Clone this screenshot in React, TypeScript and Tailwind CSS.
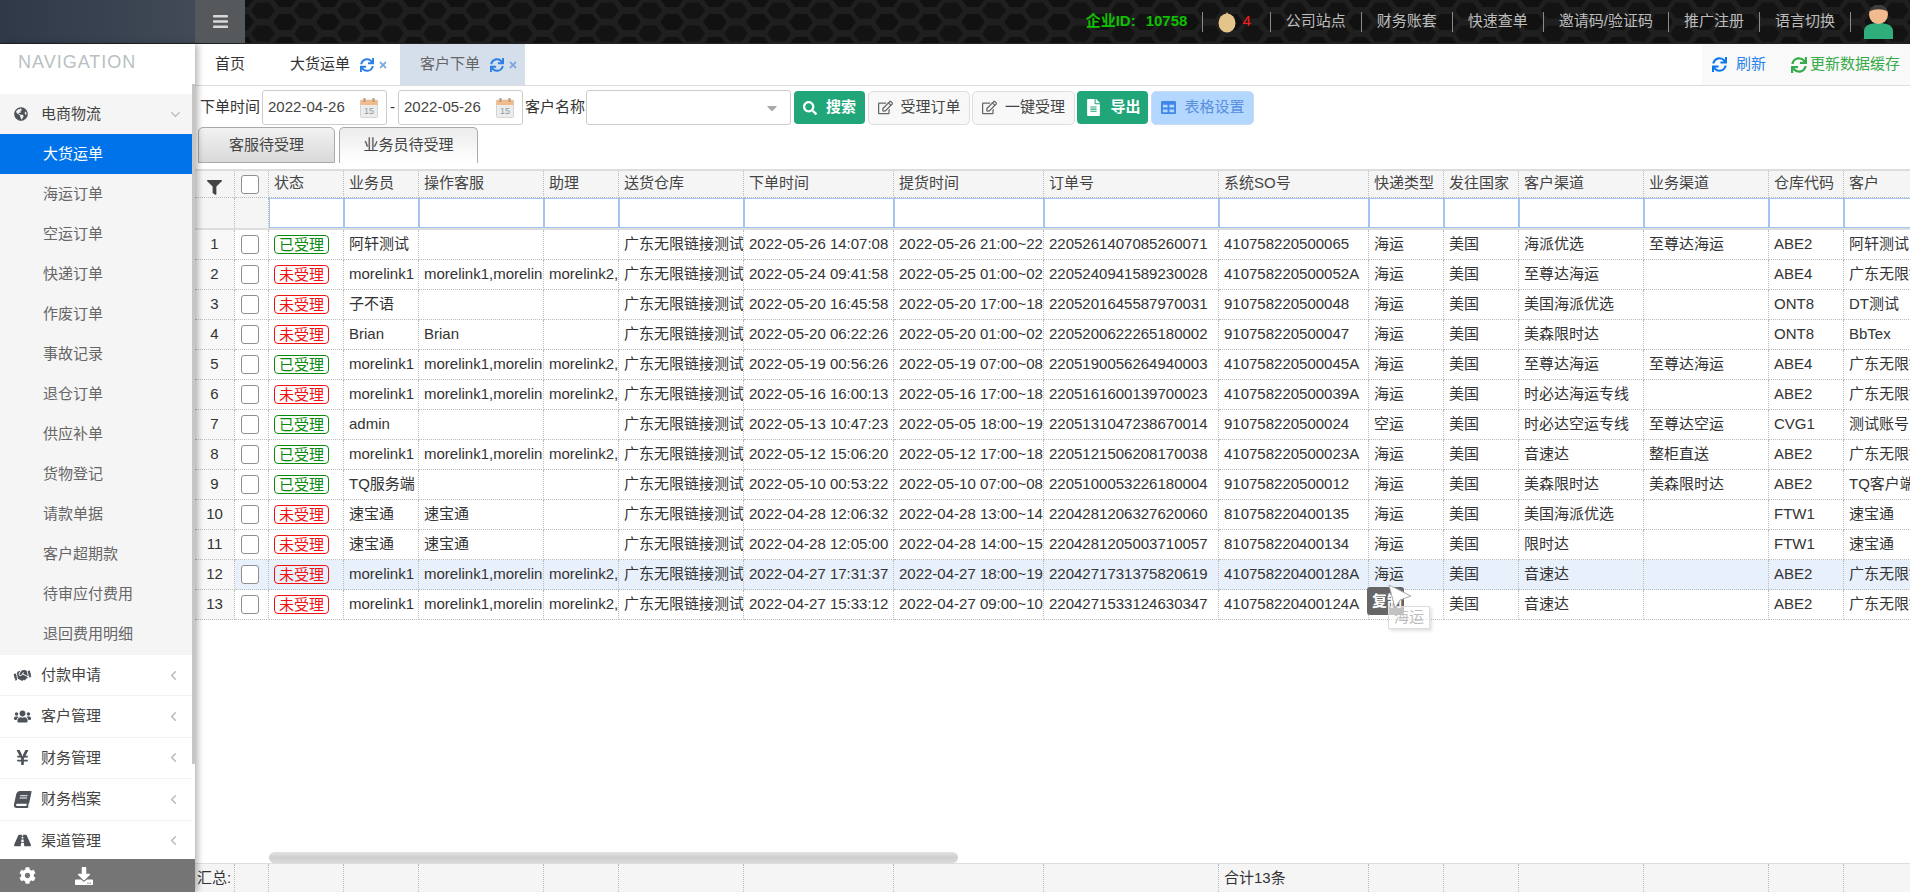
import {
  FaBars,
  FaBook,
  FaCaretDown,
  FaCog,
  FaDownload,
  FaFileAlt,
  FaFilter,
  FaGlobeAmericas,
  FaHandshake,
  FaRegEdit,
  FaRoad,
  FaSearch,
  FaSync,
  FaTable,
  FaTimes,
  FaUsers,
  FaYenSign,
} from "react-icons/fa";
import { ChevronDown, ChevronLeft } from "lucide-react";

const FONT = { fontFamily: '"Liberation Sans", "Noto Sans CJK SC", sans-serif' };

const SUB_MENU = [
  "大货运单",
  "海运订单",
  "空运订单",
  "快递订单",
  "作废订单",
  "事故记录",
  "退仓订单",
  "供应补单",
  "货物登记",
  "请款单据",
  "客户超期款",
  "待审应付费用",
  "退回费用明细",
];

const MENU = [
  { label: "付款申请", Icon: FaHandshake, tilt: "-rotate-12" },
  { label: "客户管理", Icon: FaUsers, tilt: "" },
  { label: "财务管理", Icon: FaYenSign, tilt: "" },
  { label: "财务档案", Icon: FaBook, tilt: "-skew-x-12" },
  { label: "渠道管理", Icon: FaRoad, tilt: "" },
];

const TOP_LINKS = ["公司站点", "财务账套", "快速查单", "邀请码/验证码", "推广注册", "语言切换"];

const COLUMNS = [
  { title: "状态", width: 75 },
  { title: "业务员", width: 75 },
  { title: "操作客服", width: 125 },
  { title: "助理", width: 75 },
  { title: "送货仓库", width: 125 },
  { title: "下单时间", width: 150 },
  { title: "提货时间", width: 150 },
  { title: "订单号", width: 175 },
  { title: "系统SO号", width: 150 },
  { title: "快递类型", width: 75 },
  { title: "发往国家", width: 75 },
  { title: "客户渠道", width: 125 },
  { title: "业务渠道", width: 125 },
  { title: "仓库代码", width: 75 },
  { title: "客户", width: 75 },
];

const ML = "morelink1";
const MLS = "morelink1,morelink2";
const ML2 = "morelink2,morelink3";
const WH = "广东无限链接测试仓";
const GD = "广东无限链接测试";

// done, sales, service, assistant, ordered, pickup, order no, SO no, type, channel, biz channel, warehouse, customer
const ROWS: [boolean, string, string, string, string, string, string, string, string, string, string, string, string][] = [
  [true, "阿轩测试", "", "", "2022-05-26 14:07:08", "2022-05-26 21:00~22:00", "2205261407085260071", "410758220500065", "海运", "海派优选", "至尊达海运", "ABE2", "阿轩测试"],
  [false, ML, MLS, ML2, "2022-05-24 09:41:58", "2022-05-25 01:00~02:00", "2205240941589230028", "410758220500052A", "海运", "至尊达海运", "", "ABE4", GD],
  [false, "子不语", "", "", "2022-05-20 16:45:58", "2022-05-20 17:00~18:00", "2205201645587970031", "910758220500048", "海运", "美国海派优选", "", "ONT8", "DT测试"],
  [false, "Brian", "Brian", "", "2022-05-20 06:22:26", "2022-05-20 01:00~02:00", "2205200622265180002", "910758220500047", "海运", "美森限时达", "", "ONT8", "BbTex"],
  [true, ML, MLS, ML2, "2022-05-19 00:56:26", "2022-05-19 07:00~08:00", "2205190056264940003", "410758220500045A", "海运", "至尊达海运", "至尊达海运", "ABE4", GD],
  [false, ML, MLS, ML2, "2022-05-16 16:00:13", "2022-05-16 17:00~18:00", "2205161600139700023", "410758220500039A", "海运", "时必达海运专线", "", "ABE2", GD],
  [true, "admin", "", "", "2022-05-13 10:47:23", "2022-05-05 18:00~19:00", "2205131047238670014", "910758220500024", "空运", "时必达空运专线", "至尊达空运", "CVG1", "测试账号"],
  [true, ML, MLS, ML2, "2022-05-12 15:06:20", "2022-05-12 17:00~18:00", "2205121506208170038", "410758220500023A", "海运", "音速达", "整柜直送", "ABE2", GD],
  [true, "TQ服务端", "", "", "2022-05-10 00:53:22", "2022-05-10 07:00~08:00", "2205100053226180004", "910758220500012", "海运", "美森限时达", "美森限时达", "ABE2", "TQ客户端"],
  [false, "速宝通", "速宝通", "", "2022-04-28 12:06:32", "2022-04-28 13:00~14:00", "2204281206327620060", "810758220400135", "海运", "美国海派优选", "", "FTW1", "速宝通"],
  [false, "速宝通", "速宝通", "", "2022-04-28 12:05:00", "2022-04-28 14:00~15:00", "2204281205003710057", "810758220400134", "海运", "限时达", "", "FTW1", "速宝通"],
  [false, ML, MLS, ML2, "2022-04-27 17:31:37", "2022-04-27 18:00~19:00", "2204271731375820619", "410758220400128A", "海运", "音速达", "", "ABE2", GD],
  [false, ML, MLS, ML2, "2022-04-27 15:33:12", "2022-04-27 09:00~10:00", "2204271533124630347", "410758220400124A", "海运", "音速达", "", "ABE2", GD],
];

function HexPattern() {
  return (
    <svg className="absolute inset-0 h-full w-full" aria-hidden="true">
      <defs>
        <pattern id="hex" width="43" height="23" patternUnits="userSpaceOnUse" x="-3" y="-1">
          <rect width="43" height="23" fill="#1f1f1f" />
          <polygon points="15,3.5 27,3.5 33,11.5 27,19.5 15,19.5 9,11.5" fill="#131313" />
          <polygon points="-6,-8 6,-8 12,0 6,8 -6,8 -12,0" fill="#111111" />
          <polygon points="37,-8 49,-8 55,0 49,8 37,8 31,0" fill="#111111" />
          <polygon points="-6,15 6,15 12,23 6,31 -6,31 -12,23" fill="#111111" />
          <polygon points="37,15 49,15 55,23 49,31 37,31 31,23" fill="#111111" />
        </pattern>
      </defs>
      <rect width="100%" height="100%" fill="url(#hex)" />
    </svg>
  );
}

function TopBar() {
  return (
    <header className="flex h-[44px] shrink-0 border-b border-[#222]">
      <div className="w-[195px] bg-gradient-to-r from-[#2f3948] to-[#414a56]" />
      <div className="flex w-[50px] items-center justify-center bg-[#55595c] text-[#d8d8d8]">
        <FaBars size={17} />
      </div>
      <div className="relative flex flex-1 items-center justify-end overflow-hidden pr-[17px] text-[15px] text-[#bdbdbd]">
        <HexPattern />
        <div className="relative flex items-center">
          <span className="pr-[15px] font-bold text-[#0fc100]">
            企业ID:<span className="ml-[10px]">10758</span>
          </span>
          <span className="flex h-[20px] items-center gap-[6px] border-x border-[#8a8a8a] pl-[15px] pr-[19px]">
            <svg width="18" height="22" viewBox="0 0 18 22" aria-hidden="true">
              <ellipse cx="9" cy="12" rx="8.5" ry="9.5" fill="#e3c58c" />
              <path d="M9 1 L7 5 L11 5 Z" fill="#e3c58c" />
            </svg>
            <span className="text-[#ff1a1a]">4</span>
          </span>
          {TOP_LINKS.map((link) => (
            <span key={link} className="flex h-[20px] items-center border-r border-[#8a8a8a] px-[15px]">
              {link}
            </span>
          ))}
          <svg className="ml-[13px]" width="29" height="34" viewBox="0 0 29 34" aria-hidden="true">
            <path d="M0 34 V26 C0 20 7 18 14.5 18 C22 18 29 20 29 26 V34 Z" fill="#2fae7c" />
            <circle cx="14.5" cy="9.5" r="9.5" fill="#f2bb8d" />
            <path d="M5.5 6.5 C7 1.5 11 0 14.5 0 C18 0 22 1.5 23.5 6.5 C18 3.5 11 3.5 5.5 6.5 Z" fill="#3c3c3c" />
          </svg>
        </div>
      </div>
    </header>
  );
}

function Sidebar() {
  return (
    <aside className="relative z-10 flex w-[195px] shrink-0 flex-col bg-white shadow-[3px_0_6px_rgba(0,0,0,0.28)]">
      <div className="min-h-0 flex-1 overflow-hidden">
        <div className="h-[50px] pl-[18px] pt-[7px] text-[18px] leading-[22px] tracking-[1px] text-[#b9bfc2]">
          NAVIGATION
        </div>
        <div className="w-[192px] bg-[#f5f5f5] pb-[1px]">
          <div className="flex h-[40px] items-center text-[15px] text-[#444]">
            <FaGlobeAmericas className="ml-[14px] text-[#4d5359]" size={14} />
            <span className="ml-[13px]">电商物流</span>
            <ChevronDown className="ml-auto mr-[9px] text-[#b4b4b4]" size={15} strokeWidth={2} />
          </div>
          {SUB_MENU.map((item, index) => (
            <div
              key={item}
              className={
                index === 0
                  ? "flex h-[40px] items-center bg-[#0073ea] pl-[43px] text-[15px] text-white"
                  : "flex h-[40px] items-center pl-[43px] text-[15px] text-[#666]"
              }
            >
              {item}
            </div>
          ))}
        </div>
        <div className="w-[192px]">
          {MENU.map(({ label, Icon, tilt }) => (
            <div key={label} className="flex h-[41.4px] items-center border-b border-[#f2f2f2] text-[15px] text-[#444]">
              <span className="flex w-[41px] justify-start pl-[14px] text-[#4d5359]">
                <Icon size={17} className={tilt} />
              </span>
              <span>{label}</span>
              <ChevronLeft className="ml-auto mr-[11px] text-[#b4b4b4]" size={15} strokeWidth={2} />
            </div>
          ))}
        </div>
      </div>
      <div className="absolute right-0 top-[40px] h-[680px] w-[3px] bg-[#c6c6c6]" />
      <div className="flex h-[33px] shrink-0 items-center bg-[#757575] text-white">
        <FaCog className="ml-[19px]" size={17} />
        <FaDownload className="ml-[39px]" size={18} />
      </div>
    </aside>
  );
}

function TabBar() {
  return (
    <div className="flex h-[42px] shrink-0 border-b border-[#ddd] text-[15px] text-[#333]">
      <div className="flex w-[75px] items-center pl-[20px]">首页</div>
      <div className="flex w-[130px] items-center pl-[20px]">
        大货运单
        <FaSync className="ml-[10px] text-[#2b7fe8]" size={14} />
        <FaTimes className="ml-[4px] text-[#7da7d8]" size={10} />
      </div>
      <div className="flex w-[125px] items-center bg-[#d5dfeb] pl-[20px] text-[#666]">
        客户下单
        <FaSync className="ml-[10px] text-[#2b7fe8]" size={14} />
        <FaTimes className="ml-[4px] text-[#7da7d8]" size={10} />
      </div>
      <div className="ml-auto flex w-[208px] items-center bg-[#f9f9f9] pl-[10px]">
        <FaSync className="text-[#0b78ee]" size={15} />
        <span className="ml-[9px] text-[#2c83ea]">刷新</span>
        <FaSync className="ml-[25px] text-[#37ab49]" size={16} />
        <span className="ml-[3px] text-[#37ab49]">更新数据缓存</span>
      </div>
    </div>
  );
}

function CalendarIcon() {
  return (
    <svg width="18" height="20" viewBox="0 0 18 20" aria-hidden="true">
      <rect x="0.5" y="2" width="17" height="17.5" rx="1" fill="#ececec" stroke="#d5d5d5" />
      <rect x="0.5" y="2" width="17" height="5" fill="#f1bb8b" />
      <rect x="3.5" y="0" width="2" height="4" fill="#b99a78" />
      <rect x="12.5" y="0" width="2" height="4" fill="#b99a78" />
      <text x="4" y="15.5" fontSize="9" fill="#8b9aa5" fontFamily="Liberation Sans">
        15
      </text>
    </svg>
  );
}

function DateInput({ value }: { value: string }) {
  return (
    <div className="flex h-[35px] w-[125px] items-center justify-between rounded-[3px] border border-[#ccc] bg-white pl-[5px] pr-[8px] text-[15px] text-[#444]">
      {value}
      <CalendarIcon />
    </div>
  );
}

function Toolbar() {
  const lightBtn =
    "flex h-[34px] items-center justify-center gap-[8px] rounded-[5px] border border-[#ddd] bg-[#f8f8f8] text-[15px] text-[#444]";
  const greenBtn =
    "flex h-[33px] items-center justify-center gap-[9px] rounded-[4px] bg-[#21a67a] text-[15px] text-white";

  return (
    <div className="mt-[4px] flex h-[35px] shrink-0 items-center pl-[5px] text-[15px] text-[#333]">
      <span className="mr-[2px]">下单时间</span>
      <DateInput value="2022-04-26" />
      <span className="ml-[3px] mr-[5px] w-[3px]">-</span>
      <DateInput value="2022-05-26" />
      <span className="ml-[2px] mr-[1px]">客户名称</span>
      <div className="flex h-[35px] w-[205px] items-center justify-end rounded-[3px] border border-[#ccc] bg-white pr-[10px] text-[#aaa]">
        <FaCaretDown size={16} />
      </div>
      <button className={`${greenBtn} ml-[3px] w-[71px] font-bold`}>
        <FaSearch size={14} />
        搜索
      </button>
      <button className={`${lightBtn} ml-[3px] w-[102px]`}>
        <FaRegEdit className="text-[#666]" size={15} />
        受理订单
      </button>
      <button className={`${lightBtn} ml-[2px] w-[103px]`}>
        <FaRegEdit className="text-[#666]" size={15} />
        一键受理
      </button>
      <button className={`${greenBtn} ml-[2px] w-[71px] font-bold`}>
        <FaFileAlt size={17} />
        导出
      </button>
      <button className="ml-[3px] flex h-[34px] w-[103px] items-center justify-center gap-[9px] rounded-[5px] border border-[#c6dcf5] bg-[#b3d7ff] text-[15px] text-[#5a8fdc]">
        <FaTable className="text-[#3f87e8]" size={15} />
        表格设置
      </button>
    </div>
  );
}

function SubTabs() {
  return (
    <div className="mt-[2px] flex h-[36px] shrink-0 gap-[4px] pl-[3px] text-[15px] text-[#444]">
      <div className="flex w-[137px] items-center justify-center rounded-t-[5px] border border-[#aaa] bg-gradient-to-b from-[#f2f2f2] to-[#d9d9d9]">
        客服待受理
      </div>
      <div className="flex w-[139px] items-center justify-center rounded-t-[5px] border border-b-0 border-[#aaa] bg-gradient-to-b from-[#ececec] to-white">
        业务员待受理
      </div>
    </div>
  );
}

function ColGroup() {
  return (
    <colgroup>
      <col className="w-[40px]" />
      <col className="w-[34px]" />
      {COLUMNS.map((col) => (
        <col key={col.title} style={{ width: col.width }} />
      ))}
    </colgroup>
  );
}

function Check() {
  return <div className="ml-[6px] h-[19px] w-[18px] rounded-[3px] border border-[#8f8f8f] bg-white" />;
}

function Cell({ children }: { children?: React.ReactNode }) {
  return (
    <td className="h-[30px] overflow-hidden whitespace-nowrap border-b border-r border-dotted border-[#bbb] p-0 pl-[5px] align-middle">
      {children}
    </td>
  );
}

function DataTable() {
  return (
    <div className="mt-[6px] min-h-0 flex-1 overflow-hidden border-t-2 border-[#ddd]">
      <table className="w-[1724px] table-fixed border-separate border-spacing-0 text-[15px] text-[#333]">
        <ColGroup />
        <thead>
          <tr className="h-[27px] bg-[#f5f5f5] text-[#444]">
            <th className="border-b border-r border-dotted border-[#bbb] p-0 align-top">
              <FaFilter className="mx-auto mt-[9px] text-[#444]" size={15} />
            </th>
            <th className="border-b border-r border-dotted border-[#bbb] p-0">
              <Check />
            </th>
            {COLUMNS.map((col) => (
              <th
                key={col.title}
                className="overflow-hidden whitespace-nowrap border-b border-r border-dotted border-[#bbb] p-0 pb-[2px] pl-[5px] text-left font-normal"
              >
                {col.title}
              </th>
            ))}
          </tr>
          <tr className="h-[32px] bg-[#f5f5f5]">
            <th className="border-b-2 border-r border-dotted border-[#bbb] border-b-[#ddd] p-0 [border-bottom-style:solid]" />
            <th className="border-b-2 border-r border-dotted border-[#bbb] border-b-[#ddd] p-0 [border-bottom-style:solid]" />
            {COLUMNS.map((col) => (
              <th key={col.title} className="border-b-2 border-b-[#ddd] p-0">
                <input className="block h-[30px] w-full border border-[#a3c4ee] bg-white outline-none" />
              </th>
            ))}
          </tr>
        </thead>
        <tbody>
          {ROWS.map((row, index) => {
            const [done, sales, service, assistant, ordered, pickup, orderNo, soNo, type, channel, bizChannel, warehouse, customer] = row;
            return (
              <tr key={orderNo} className={index === 11 ? "bg-[#e8f0fb]" : "bg-white"}>
                <td className="h-[30px] border-b border-r border-dotted border-[#bbb] bg-[#f8f8f8] p-0 text-center">
                  {index + 1}
                </td>
                <td className="h-[30px] border-b border-r border-dotted border-[#bbb] p-0">
                  <Check />
                </td>
                <Cell>
                  {done ? (
                    <span className="block h-[19px] w-[55px] rounded-[4px] border border-[#0a8a0a] text-center text-[15px] leading-[17px] text-[#0a8a0a]">
                      已受理
                    </span>
                  ) : (
                    <span className="block h-[19px] w-[55px] rounded-[4px] border border-[#f01010] text-center text-[15px] leading-[17px] text-[#f01010]">
                      未受理
                    </span>
                  )}
                </Cell>
                <Cell>{sales}</Cell>
                <Cell>{service}</Cell>
                <Cell>{assistant}</Cell>
                <Cell>{WH}</Cell>
                <Cell>{ordered}</Cell>
                <Cell>{pickup}</Cell>
                <Cell>{orderNo}</Cell>
                <Cell>{soNo}</Cell>
                <Cell>{type}</Cell>
                <Cell>美国</Cell>
                <Cell>{channel}</Cell>
                <Cell>{bizChannel}</Cell>
                <Cell>{warehouse}</Cell>
                <Cell>{customer}</Cell>
              </tr>
            );
          })}
        </tbody>
      </table>
    </div>
  );
}

function SummaryBar() {
  return (
    <>
      <div className="h-[11px] shrink-0 pl-[74px]">
        <div className="h-[11px] w-[689px] rounded-[6px] bg-gradient-to-b from-[#e2e2e2] via-[#cfcfcf] to-[#dadada]" />
      </div>
      <div className="h-[29px] shrink-0 overflow-hidden border-t border-[#ddd] bg-[#f5f5f5]">
        <table className="w-[1724px] table-fixed border-separate border-spacing-0 text-[15px] text-[#333]">
          <ColGroup />
          <tbody>
            <tr>
              <td className="h-[28px] overflow-hidden whitespace-nowrap border-r border-dotted border-[#bbb] p-0 pl-[2px]">汇总:</td>
              <td className="border-r border-dotted border-[#bbb] p-0" />
              {COLUMNS.map((col) => (
                <td key={col.title} className="overflow-hidden whitespace-nowrap border-r border-dotted border-[#bbb] p-0 pl-[5px]">
                  {col.title === "系统SO号" ? "合计13条" : ""}
                </td>
              ))}
            </tr>
          </tbody>
        </table>
      </div>
    </>
  );
}

function DragOverlay() {
  return (
    <>
      <div className="absolute left-[1367px] top-[587px] flex h-[28px] w-[37px] items-center rounded-[3px] bg-[#666] pl-[5px] text-[15px] font-bold text-white">
        复制
      </div>
      <div className="absolute left-[1388px] top-[606px] flex h-[23px] w-[42px] items-center justify-center border border-[#ddd] bg-white/60 text-[15px] text-[#bdbdbd] shadow-[2px_2px_3px_rgba(0,0,0,0.12)]">
        海运
      </div>
      <svg className="absolute left-[1388px] top-[584px]" width="24" height="25" viewBox="0 0 24 25" aria-hidden="true">
        <polygon points="1,1 23,12 12,16 7,24" fill="#fff" stroke="#aaa" strokeWidth="1" />
      </svg>
    </>
  );
}

export default function App() {
  return (
    <div className="relative flex h-[892px] w-[1910px] flex-col overflow-hidden bg-white" style={FONT}>
      <TopBar />
      <div className="flex min-h-0 flex-1">
        <Sidebar />
        <main className="flex min-w-0 flex-1 flex-col">
          <TabBar />
          <Toolbar />
          <SubTabs />
          <DataTable />
          <SummaryBar />
        </main>
      </div>
      <DragOverlay />
    </div>
  );
}
